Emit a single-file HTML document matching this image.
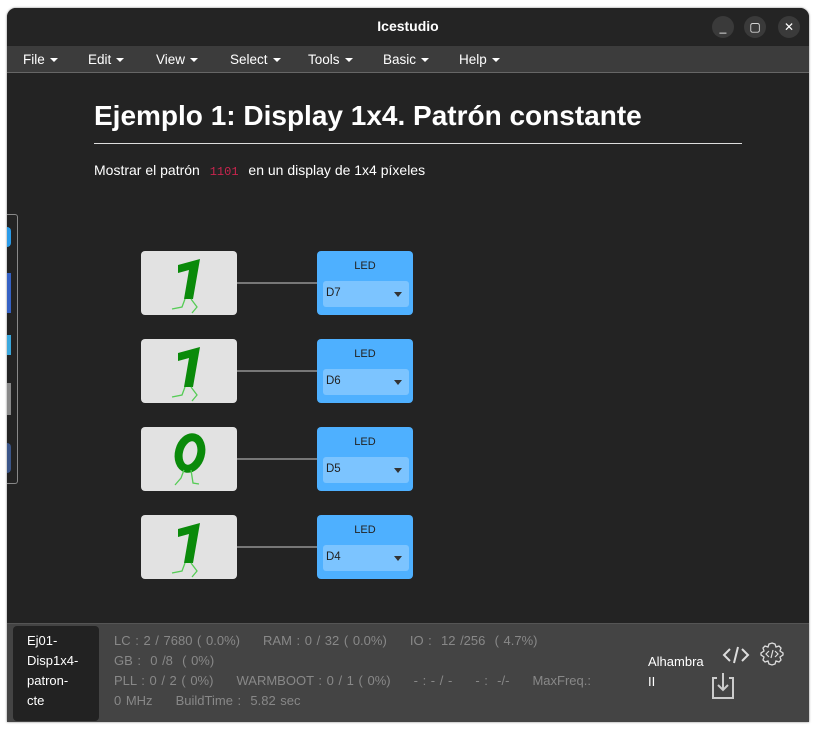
<!DOCTYPE html>
<html><head><meta charset="utf-8"><style>
*{margin:0;padding:0;box-sizing:border-box}
body{width:817px;height:729px;background:#fff;position:relative;overflow:hidden;font-family:"Liberation Sans",sans-serif}
.win{position:absolute;left:7px;top:8px;width:802px;height:714px;background:#232323;border-radius:9px 9px 0 0;overflow:hidden;box-shadow:0 0 2px rgba(0,0,0,.5)}
.title{position:absolute;left:0;top:0;width:100%;height:37px;background:#242424;color:#fff;font-weight:bold;font-size:14px;text-align:center;line-height:37px}
.btn{position:absolute;top:8px;width:22px;height:22px;border-radius:50%;background:#3a3a3a;color:#fff;font-size:12px;line-height:22px;text-align:center;font-weight:normal}
.menu{position:absolute;left:0;top:38px;width:100%;height:27px;background:#3c3c3c;border-bottom:1px solid #666;color:#fff;font-size:13.5px}
.menu span{position:absolute;top:6px}
.menu span:after{content:"";display:inline-block;margin-left:5px;border-left:4px solid transparent;border-right:4px solid transparent;border-top:4px solid #fff;vertical-align:middle}
h1{position:absolute;left:87px;top:92px;color:#fff;font-size:28px;font-weight:bold}
.hr{position:absolute;left:87px;top:135px;width:648px;height:1px;background:#ddd}
.p{position:absolute;left:87px;top:154px;color:#fff;font-size:14px}
.p code{font-family:"Liberation Mono",monospace;color:#c7254e;font-size:12px;margin:0 6px}
.src{position:absolute;left:134px;width:96px;height:64px;background:#e2e2e2;border-radius:4px}
.wire{position:absolute;left:230px;width:80px;height:2px;background:#777}
.led{position:absolute;left:310px;width:96px;height:64px;background:#4eb0ff;border-radius:4px;color:#222;font-size:11px}
.led .t{position:absolute;top:9px;width:100%;text-align:center}
.led .d{position:absolute;left:6px;top:30px;width:86px;height:26px;background:#7cc4ff;border-radius:3px;padding:6px 3px;font-size:11.5px}
.led .d:after{content:"";position:absolute;right:7px;top:11px;border-left:4px solid transparent;border-right:4px solid transparent;border-top:5px solid #333}
.side{position:absolute;left:0;top:206px;width:11px;height:270px;border:1px solid #888;border-left:none;border-radius:0 3px 3px 0}
.side i{position:absolute;left:0;width:4px;display:block}
.foot{position:absolute;left:0;top:615px;width:100%;height:99px;background:#444;border-top:1px solid #555}
.name{position:absolute;left:6px;top:2px;width:86px;height:95px;background:#222;border-radius:4px;color:#fff;font-size:13px;line-height:20px;padding:5px 14px}
.stats{position:absolute;left:107px;top:7px;color:#888;font-size:13px;line-height:20px;width:500px;word-spacing:1px}
.board{position:absolute;left:641px;top:28px;color:#fff;font-size:13px;line-height:20px}
</style></head><body>
<div class="win">
<div class="title">Icestudio
<div class="btn" style="left:705px">_</div><div class="btn" style="left:737px">▢</div><div class="btn" style="left:771px">✕</div></div>
<div class="menu"><span style="left:16px">File</span><span style="left:81px">Edit</span><span style="left:149px">View</span><span style="left:223px">Select</span><span style="left:301px">Tools</span><span style="left:376px">Basic</span><span style="left:452px">Help</span></div>
<h1>Ejemplo 1: Display 1x4. Patrón constante</h1>
<div class="hr"></div>
<div class="p">Mostrar el patrón <code>1101</code> en un display de 1x4 píxeles</div>
<div class="side"><i style="top:12px;height:20px;background:#2a9be8;border-radius:0 4px 4px 0"></i><i style="top:58px;height:40px;background:#3561c4"></i><i style="top:120px;height:20px;background:#3aa8dd"></i><i style="top:168px;height:32px;background:#888"></i><i style="top:228px;height:30px;background:#3a5588;border-radius:0 8px 8px 0"></i></div>

<svg width="0" height="0" style="position:absolute"><defs>
<g id="one"><path d="M37 14 L59 8 L52 48 L43 48 L48 19 L37 22 Z" fill="#0a8a0a"/><path d="M44 48 L41 56 L31 58 M50 48 L56 56 L51 62" stroke="#5c5" stroke-width="1.3" fill="none"/></g>
<g id="zero"><ellipse cx="49" cy="26" rx="11" ry="16" fill="none" stroke="#0a8a0a" stroke-width="8" transform="rotate(15 49 26)"/><path d="M43 43 L40 51 L34 58 M50 43 L52 56 L58 57" stroke="#5c5" stroke-width="1.3" fill="none"/></g>
</defs></svg>

<div class="src" style="top:243px"><svg width="96" height="64"><use href="#one"/></svg></div>
<div class="wire" style="top:274px"></div>
<div class="led" style="top:243px"><div class="t">LED</div><div class="d">D7</div></div>

<div class="src" style="top:331px"><svg width="96" height="64"><use href="#one"/></svg></div>
<div class="wire" style="top:362px"></div>
<div class="led" style="top:331px"><div class="t">LED</div><div class="d">D6</div></div>

<div class="src" style="top:419px"><svg width="96" height="64"><use href="#zero"/></svg></div>
<div class="wire" style="top:450px"></div>
<div class="led" style="top:419px"><div class="t">LED</div><div class="d">D5</div></div>

<div class="src" style="top:507px"><svg width="96" height="64"><use href="#one"/></svg></div>
<div class="wire" style="top:538px"></div>
<div class="led" style="top:507px"><div class="t">LED</div><div class="d">D4</div></div>

<div class="foot">
<div class="name">Ej01-<br>Disp1x4-<br>patron-<br>cte</div>
<div class="stats">LC : 2 / 7680 ( 0.0%) &nbsp;&nbsp;&nbsp; RAM : 0 / 32 ( 0.0%) &nbsp;&nbsp;&nbsp; IO : &nbsp;12 /256 &nbsp;( 4.7%)<br>GB : &nbsp;0 /8 &nbsp;( 0%)<br>PLL : 0 / 2 ( 0%) &nbsp;&nbsp;&nbsp; WARMBOOT : 0 / 1 ( 0%) &nbsp;&nbsp;&nbsp; - : - / - &nbsp;&nbsp;&nbsp; - : &nbsp;-/- &nbsp;&nbsp;&nbsp; MaxFreq.:<br>0 MHz &nbsp;&nbsp;&nbsp; BuildTime : &nbsp;5.82 sec</div>
<div class="board">Alhambra<br>II</div>
<svg style="position:absolute;left:714px;top:20px" width="30" height="22"><path d="M9 5 L3 11 L9 17 M21 5 L27 11 L21 17 M17 3 L13 19" stroke="#ddd" stroke-width="2" fill="none"/></svg>
<svg style="position:absolute;left:751px;top:16px" width="28" height="28"><path d="M14 3 L17 4 L18 7 L21 6 L23 8 L22 11 L25 13 L25 15 L22 17 L23 20 L21 22 L18 21 L17 24 L14 25 L11 24 L10 21 L7 22 L5 20 L6 17 L3 15 L3 13 L6 11 L5 8 L7 6 L10 7 L11 4 Z" stroke="#ddd" stroke-width="1.3" fill="none"/><path d="M11 11 L8 14 L11 17 M17 11 L20 14 L17 17 M15 10 L13 18" stroke="#ddd" stroke-width="1.2" fill="none"/></svg>
<svg style="position:absolute;left:704px;top:48px" width="24" height="28"><path d="M6 6 L2 6 L2 26 L22 26 L22 6 L18 6 M12 1 L12 18 M7 13 L12 18 L17 13" stroke="#ccc" stroke-width="2" fill="none"/></svg>
</div>
</div>
</body></html>
